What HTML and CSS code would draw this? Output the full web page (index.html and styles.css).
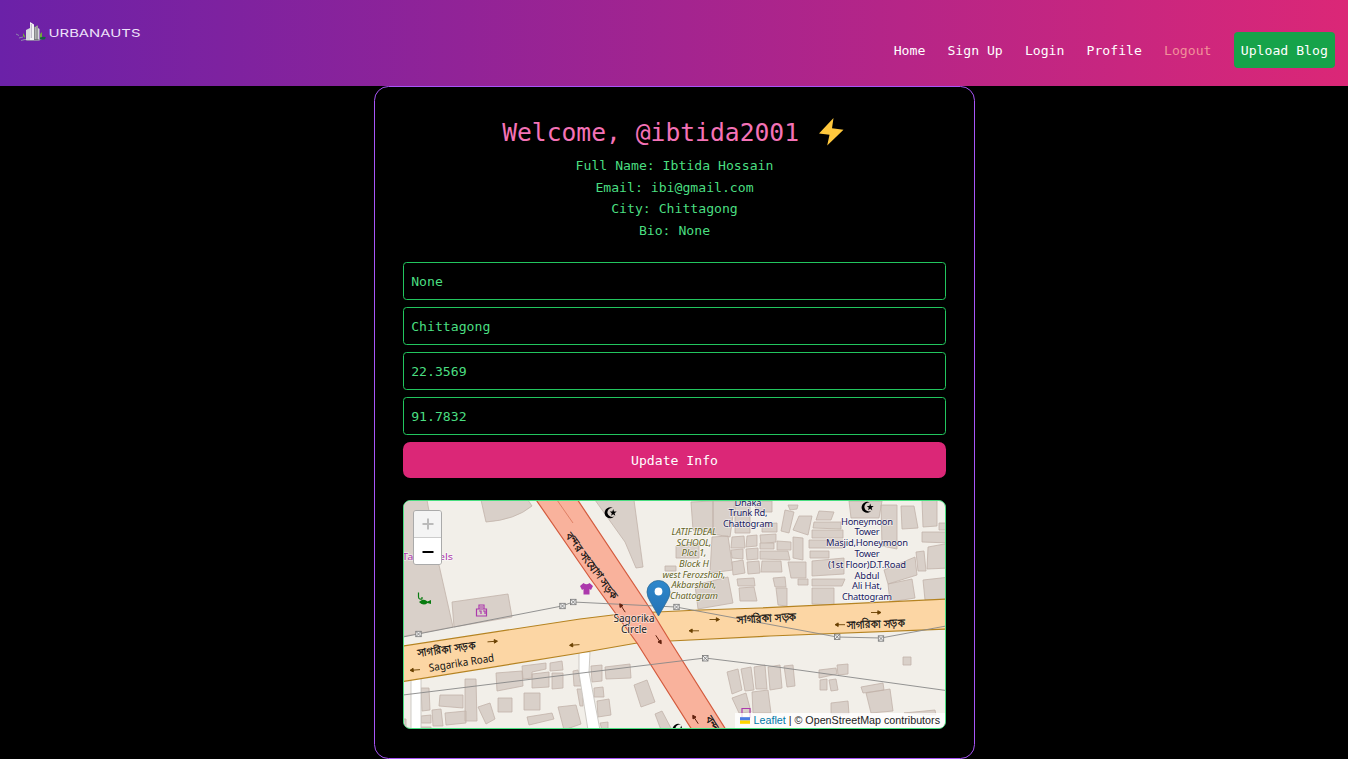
FILE: index.html
```html
<!DOCTYPE html>
<html lang="en">
<head>
<meta charset="utf-8">
<title>Urbanauts - Profile</title>
<link rel="stylesheet" href="styles.css">
</head>
<body>
<header class="navbar">
  <a class="logo" href="#">
    <svg width="128" height="24" viewBox="14 20 128 24">
      <path d="M23 39h19l-3 1.800H27z" fill="#9c9aa9"/>
      <path d="M26 30l4-2v12h-4z" fill="#d8d8de"/>
      <path d="M30 22l4 2.500V40h-4z" fill="#f2f2f4"/>
      <path d="M31.300 24v14" stroke="#8b7b9d" stroke-width=".6"/>
      <path d="M34 27l4-2V40h-4z" fill="#77777c"/>
      <path d="M35.300 27v12M37 26v13" stroke="#ddd" stroke-width=".7"/>
      <path d="M38 28l1.500 1v10H38z" fill="#d6d6dc"/>
      <path d="M16 34l3 1.500M19 38l4-1M21 40.500l4-1" stroke="#8d84ac" stroke-width="1"/>
      <path d="M23 33l2 3v2l-2-2zM42 32l-2 2v4l2-1z" fill="#70a83c"/>
      <path d="M40 37.500l4-.8 2 .8-1.500 2H40z" fill="#14633e"/>
      <text class="logo-text" x="48.500" y="37.300" textLength="92" lengthAdjust="spacingAndGlyphs">URBANAUTS</text>
    </svg>
  </a>
  <nav class="nav-links">
    <a href="#">Home</a>
    <a href="#">Sign Up</a>
    <a href="#">Login</a>
    <a href="#">Profile</a>
    <a class="logout" href="#">Logout</a>
    <a class="upload" href="#">Upload Blog</a>
  </nav>
</header>

<main class="card">
  <h1 class="title">Welcome, @ibtida2001 <svg class="bolt" viewBox="0 0 26 28"><path d="M15.500 0L1 15.500l10.500 1.200L9.200 27.500 25.500 11.800 14 10.300z" fill="#ffc83d"/></svg></h1>
  <div class="details">
    <p>Full Name: Ibtida Hossain</p>
    <p>Email: ibi@gmail.com</p>
    <p>City: Chittagong</p>
    <p>Bio: None</p>
  </div>
  <form class="form">
    <input class="field" type="text" value="None">
    <input class="field" type="text" value="Chittagong">
    <input class="field" type="text" value="22.3569">
    <input class="field" type="text" value="91.7832">
    <button class="submit" type="button">Update Info</button>
  </form>

  <div class="map">
    <svg class="map-canvas" viewBox="404 501 541 227">
      <defs>
        <path id="arrow" d="M-5 0H2M1.800-1.800L5 0 1.800 1.800z" stroke-width=".9"/>
        <g id="pylon"><rect x="-2.700" y="-2.700" width="5.400" height="5.400" fill="#eee" stroke="#777" stroke-width=".8"/><path d="M-2.500-2.500l5 5m0-5l-5 5" stroke="#777" stroke-width=".8"/></g>
        <g id="mosque"><path d="M2.800-4.500A5.500 5.500 0 1 0 4.500 3.600 4.500 4.500 0 1 1 2.800-4.500z"/><path d="M3.200-3.500l.8 2.500 2.700.1-2.100 1.600.7 2.500-2.200-1.500L1 3.200l.8-2.500L-.2-.9 2.400-1z"/></g>
      </defs>

      <g class="buildings">
        <path d="M400 500H427L439 565 453 627 400 637zM452 602L508 594 512 617 454 627zM481 500L486 522Q515 520 532 506L528 500zM595 500H634L643 567 636 568 625 542z"/>
        <path d="M691 502L713 501 713 532 693 530zM713 501H735L730 537 713 534zM735 501H750V533H735zM676 546L699 543V558H676zM665 566H676V571H665zM712 537L728 536 733 570 710 573zM695 585L728 577 733 603 698 609z"/>
        <path d="M732 537L744 536 745 548 731 548zM747 536L757 535V546L746 547zM760 535L776 534V542L761 544zM731 550L743 549 743 559 732 558zM746 549L758 548V559L747 560zM732 562L743 560 745 573 733 575zM747 562L759 561 760 573 748 574zM737 579L754 578 755 586 738 586zM739 588L754 587 757 601 740 601z"/>
        <path d="M788 505L798 505 797 509 790 510zM785 510L794 512 789 533 781 531zM799 516L812 516 808 535 793 530zM777 541L791 542V550H777zM760 543H774V549H760zM760 551L788 551 790 560 760 559zM762 561L781 561 782 572H761zM793 537L803 538V560L793 558zM788 562L806 562V578H791zM773 578L785 577 786 587 775 587zM776 588H787V606L778 605zM798 579H808V585H798zM752 501H772V512H758zM762 524L777 523V532H762z"/>
        <path d="M819 511L834 512 831 520H816zM814 522H841V529L813 528zM812 530H843V538H812zM809 540H843V548H809zM810 551H829V558H810zM812 561L844 558V574L812 576zM812 579H845L842 586H812zM812 588H834V605L812 604zM849 501H882L879 518H851zM881 505L897 505V549L882 546zM901 506L914 506 918 528 902 529zM922 500H937V526L923 527zM943 500H950V508zM922 532H950V543L922 542zM939 523H950V530H939zM884 570L915 557 917 575 888 584zM888 584L912 579 915 598 890 602zM916 552L924 551 926 571 918 571zM928 547L950 543V568L927 569zM923 580L950 577V600L925 600z"/>
        <path d="M421 688L429 688 430 710 422 711zM440 695H463V708L439 706zM465 679L476 679 477 721H465zM496 673L522 671 523 686 497 691zM522 666L546 663 546 669 532 672 532 678 523 679zM550 663L562 661 563 670 550 671zM532 674L549 672V687L532 688zM552 673L563 673V688L552 689zM478 707L490 703 495 719 486 724zM498 698H512V712H498zM524 693H540V710H524zM445 713L466 711V723L446 725zM432 710L441 709 443 726H433zM421 716L431 715V723H421zM527 717L552 713 554 719 529 725zM558 707L576 705 581 724 564 730zM573 671L578 670 581 686 574 686zM577 689L583 689V706L580 706zM403 719H406V729H403zM420 727H431V730H420z"/>
        <path d="M591 666L602 665V681L592 682zM605 667L630 664 631 678 606 679zM594 688L603 687 604 697H594zM597 701L609 699 611 715 598 717zM634 685L647 680 655 702 641 707zM655 714L662 711 672 730H661zM600 723L608 722V730H602z"/>
        <path d="M727 672L738 669 742 690 732 694zM741 669L751 667 754 690 745 691zM754 667L765 665 767 689 756 689zM768 667L780 665 782 688 770 690zM784 666L793 665 795 686 787 687zM732 698L746 693 751 712 739 713zM752 692L768 690 771 713H753zM819 670L836 668 837 674 819 678zM837 665L848 664V674L838 675zM820 680L827 679V690H820zM829 680L836 679 838 690 831 691zM861 687L883 683 884 690 863 693zM866 693L890 689 893 711 871 713zM831 703L848 701 849 714H831zM903 657H911V665H903zM904 713L935 710 936 715z"/>
      </g>

      <g class="lanes">
        <path d="M411 676H421V730H411zM579 652H590L589 672 600 730H588L579 673z"/>
      </g>
      <path d="M400 646.500L580 619 625 613.500 700 610 760 608 948 599V629L770 636 670 641 637 643 580 653 400 682z" fill="#fcd6a4" stroke="#b58321" stroke-width="1.200"/>
      <path d="M535.500 499L590 578 637 643 694 733H728L670 641 651 610 577 499z" fill="#f9b29c" stroke="#d45b3e" stroke-width="1.200"/>
      <path d="M557 500L573 523" stroke="#d87357" stroke-width=".8"/>
      <g class="power">
        <path d="M403 637L418 634 562 606 573 602 676 607 837 637 881 638 946 626M403 695L590 672 705 658 770 666 946 690.500"/>
      </g>
      <use href="#pylon" x="418.500" y="634"/><use href="#pylon" x="562.500" y="606"/><use href="#pylon" x="573.300" y="602"/><use href="#pylon" x="676.500" y="607"/><use href="#pylon" x="837.200" y="636.800"/><use href="#pylon" x="881" y="638.500"/><use href="#pylon" x="705.300" y="658.300"/>

      <g class="arrows">
        <use href="#arrow" transform="translate(492.500 641.500) rotate(-4)"/>
        <use href="#arrow" transform="translate(415 670) rotate(176)"/>
        <use href="#arrow" transform="translate(574.500 645) rotate(176)"/>
        <use href="#arrow" transform="translate(714.500 619.500)"/>
        <use href="#arrow" transform="translate(694 630.800) rotate(180)"/>
        <use href="#arrow" transform="translate(876 612.500)"/>
        <use href="#arrow" transform="translate(840 624.700) rotate(180)"/>
      </g>
      <g class="arrows dark">
        <use href="#arrow" transform="translate(622.500 608) rotate(-123)"/>
        <use href="#arrow" transform="translate(658.500 639.500) rotate(57)"/>
        <use href="#arrow" transform="translate(695.500 719.500) rotate(-123)"/>
      </g>

      <use href="#mosque" x="610" y="512.500"/><use href="#mosque" x="867" y="507"/><use href="#mosque" x="678" y="729"/>
      <path d="M583.500 583L580 586 582 590 583.500 589V594.500H589.500V589L591 590 593 586 589.500 583Q586.500 585.500 583.500 583z" fill="#ac39ac"/>
      <g fill="none" stroke="#ac39ac" stroke-width="1.200">
        <path d="M476.500 609H486.500V616H476.500zM479 609V605H484V609M480 607H483M479 611h2v3m2-3h2v3M742 718V708.500H750V718"/>
      </g>
      <g fill="#087b10" stroke="#087b10">
        <path d="M418.500 592.500v4q0 3.500 3.500 2.500v-2" fill="none" stroke-width="1.200"/>
        <path d="M419 602q4.500-4 8.500-.5l3.500-1.500v4l-3.500-1q-4 3.500-8.500-1z" stroke="none"/>
      </g>

      <g class="label shop">
        <text x="402" y="560" textLength="51" lengthAdjust="spacingAndGlyphs">Tas Jewels</text>
      </g>
      <g class="label school">
        <text x="694" y="534.500" textLength="45">LATIF IDEAL</text><text x="694" y="545.500" textLength="35">SCHOOL,</text><text x="694" y="556" textLength="25">Plot 1,</text><text x="694" y="566.500" textLength="30">Block H</text><text x="694" y="577.500" textLength="63">west Ferozshah,</text><text x="694" y="588" textLength="45">Akbarshah,</text><text x="694" y="599" textLength="48">Chattogram</text>
      </g>
      <g class="label place">
        <text x="748" y="505.500" textLength="27">Dhaka</text><text x="748" y="516" textLength="39">Trunk Rd,</text><text x="748" y="527" textLength="50">Chattogram</text>
        <text x="867" y="524.500" textLength="52">Honeymoon</text><text x="867" y="535.200" textLength="25">Tower</text><text x="867" y="546" textLength="82">Masjid,Honeymoon</text><text x="867" y="556.800" textLength="25">Tower</text><text x="867" y="567.500" textLength="78">(1st Floor)D.T.Road</text><text x="867" y="578.500" textLength="25">Abdul</text><text x="867" y="589" textLength="30">Ali Hat,</text><text x="867" y="600" textLength="50">Chattogram</text>
      </g>
      <g class="label street">
        <text x="634" y="621.500" textLength="41">Sagorika</text><text x="634" y="633" textLength="26">Circle</text>
      </g>
      <g class="label road">
        <text textLength="66" lengthAdjust="spacingAndGlyphs" transform="translate(462 666.500) rotate(-9)">Sagarika Road</text>
        <g class="bangla">
          <text textLength="59" lengthAdjust="spacingAndGlyphs" transform="translate(447 653) rotate(-8)">সাগরিকা সড়ক</text>
          <text textLength="60" lengthAdjust="spacingAndGlyphs" transform="translate(767 622) rotate(-3)">সাগরিকা সড়ক</text>
          <text textLength="59" lengthAdjust="spacingAndGlyphs" transform="translate(876 628) rotate(-2)">সাগরিকা সড়ক</text>
          <text textLength="80" lengthAdjust="spacingAndGlyphs" transform="translate(589 568) rotate(54)">বন্দর সংযোগ সড়ক</text>
          <text class="from-start" transform="translate(705 719) rotate(57)">বন্দর</text>
        </g>
      </g>

      <linearGradient id="pin" x2="0" y2="1"><stop stop-color="#2e88cc"/><stop offset="1" stop-color="#2572b5"/></linearGradient>
      <path d="M658.500 616L650.500 602Q647 596.500 647 592A11.400 11.400 0 0 1 670 592Q670 596.500 666.500 602z" fill="url(#pin)" stroke="#2e6c97" stroke-width=".8"/>
      <circle cx="658.500" cy="591.500" r="3.900" fill="#fff"/>
    </svg>
    <div class="zoom">
      <span class="zoom-btn disabled"><svg viewBox="0 0 12 12"><path d="M6 0.500V11.500M.5 6H11.500"/></svg></span>
      <span class="zoom-btn"><svg viewBox="0 0 12 12"><path d="M.5 7H11.500"/></svg></span>
    </div>
    <div class="attribution"><svg class="flag" viewBox="0 0 12 8"><path fill="#4c7be1" d="M0 0h12v4H0z"/><path fill="#ffd500" d="M0 4h12v4H0z"/></svg><a href="#">Leaflet</a> <span class="bar">|</span> © OpenStreetMap contributors</div>
  </div>
</main>
</body>
</html>
```
FILE: styles.css
```css
* { box-sizing: border-box; }

body {
  margin: 0;
  height: 759px;
  overflow: hidden;
  background: #000;
  color: #4ade80;
  font-family: Consolas, "DejaVu Sans Mono", monospace;
  font-size: 13.15px;
  line-height: 21.6px;
}

a { color: inherit; text-decoration: none; }
p, h1 { margin: 0; font-weight: 400; }

.navbar {
  display: flex;
  justify-content: space-between;
  align-items: flex-start;
  height: 86px;
  padding: 20px 13px 0 14px;
  background: linear-gradient(to right, #6b21a8, #db2777);
  color: #fff;
}

.logo svg { display: block; }
.logo-text {
  font: 400 10.5px "Inter", sans-serif;
  fill: #eee2fa;
}

.nav-links {
  display: flex;
  align-items: center;
  gap: 22.1px;
  margin-top: 12px;
}

.nav-links a { padding-top: 1px; }
.nav-links .logout { color: #f8a39f; opacity: .85; }

.nav-links .upload {
  padding: 8px 7.2px 6.4px;
  border-radius: 4px;
  background: #16a34a;
}

.card {
  width: 601px;
  height: 673px;
  margin: 0 auto 0 374px;
  padding: 28px;
  border: 1px solid #a855f7;
  border-radius: 14.4px;
}

.title {
  height: 40px;
  padding-top: 2px;
  color: #f472b6;
  font-size: 24.66px;
  line-height: 32px;
  text-align: center;
  white-space: nowrap;
}

.bolt {
  width: 26px;
  height: 28px;
  margin: 0 3px 0 4px;
  vertical-align: -5px;
}

.details { text-align: center; }

.form {
  display: flex;
  flex-direction: column;
  gap: 7px;
  margin-top: 21px;
}

.field {
  width: 100%;
  height: 38px;
  padding: 0 7.2px;
  border: 1px solid #22c55e;
  border-radius: 3.6px;
  background: #000;
  color: #4ade80;
  font: inherit;
}

.submit {
  height: 36px;
  border: 0;
  border-radius: 7.2px;
  background: #db2777;
  color: #fff;
  font: inherit;
}

.map {
  position: relative;
  height: 229px;
  margin-top: 22px;
  border: 1px solid #4ade80;
  border-radius: 7.2px;
  overflow: hidden;
  background: #f2efe9;
}

.map-canvas { display: block; width: 541px; height: 227px; }

.buildings { fill: #d9d0c9; stroke: #c1b2a9; stroke-width: .8; }
.lanes { fill: #fff; stroke: #c8c5c0; stroke-width: .9; }
.power { fill: none; stroke: #888; stroke-width: .9; }
.arrows { fill: #694000; stroke: #694000; }
.dark { fill: #60200d; stroke: #60200d; }

.label {
  font-family: "Noto Sans", sans-serif;
  font-size: 9.4px;
  text-anchor: middle;
  paint-order: stroke;
  stroke: rgba(255, 255, 255, .55);
  stroke-width: 1.5px;
}
.shop { fill: #ac39ac; text-anchor: start; }
.school { fill: #656526; font-style: italic; }
.place { fill: #20205e; }
.street { fill: #222; font-size: 10px; }
.road { fill: #111; font-size: 10.8px; stroke: none; }
.bangla { stroke: #111; stroke-width: .35px; }
.from-start { text-anchor: start; }

.zoom {
  position: absolute;
  top: 9px;
  left: 9px;
  width: 29px;
  border: 1px solid #aaa;
  border-radius: 3px;
  overflow: hidden;
}

.zoom-btn {
  display: flex;
  align-items: center;
  justify-content: center;
  height: 26px;
  background: #fff;
}
.zoom-btn.disabled { height: 27px; background: #f4f4f4; border-bottom: 1px solid #ccc; }
.zoom-btn svg { width: 12px; height: 12px; fill: none; stroke: #000; stroke-width: 2; }
.zoom-btn.disabled svg { stroke: #bbb; }

.attribution {
  position: absolute;
  right: 0;
  bottom: 0;
  padding: 0 5px;
  background: rgba(255, 255, 255, .8);
  color: #222;
  font: 10.72px/15px "Liberation Sans", Arial, sans-serif;
  white-space: nowrap;
}
.attribution a { color: #0078a8; }
.flag { width: 10px; height: 7px; margin-right: 4px; }
```
